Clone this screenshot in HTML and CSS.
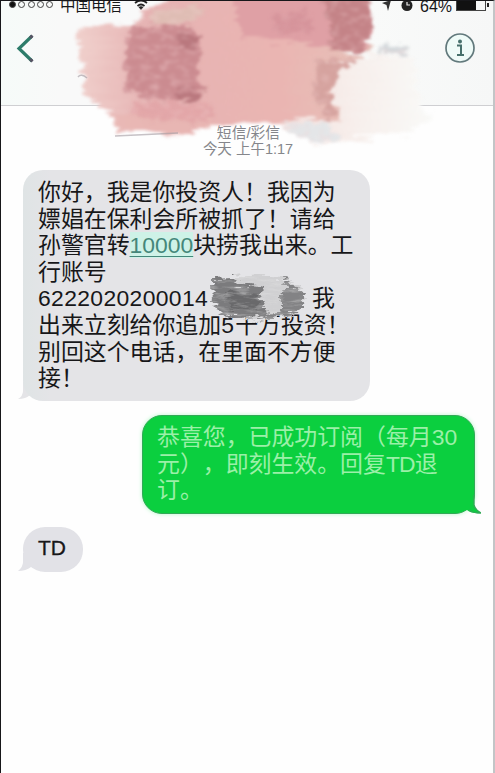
FILE: index.html
```html
<!DOCTYPE html>
<html lang="zh-CN">
<head>
<meta charset="utf-8">
<title>短信</title>
<link rel="stylesheet" href="styles.css">
</head>
<body>
<div class="phone">
  <header class="header">
    <div class="status">
      <div class="signal"><i class="on"></i><i></i><i></i><i></i><i></i></div>
      <span class="carrier">中国电信</span>
      <svg class="wifi" width="14" height="12" viewBox="0 0 14 12"><path d="M1 4Q7-1 13 4M3.500 7Q7 4 10.500 7" fill="none" stroke="#222" stroke-width="1.700"/><path d="M4.500 8Q7 6.500 9.500 8L7 11Z" fill="#222"/></svg>
      <svg class="state" width="31" height="12" viewBox="0 0 31 12"><path d="M0 3L9 0L6 11L4.500 5Z" fill="#333"/><circle cx="25" cy="5.500" r="5.500" fill="#222"/><path d="M25 2v3h3" fill="none" stroke="#eee" stroke-width="1.200"/></svg>
      <span class="percent">64%</span>
      <div class="battery"><b></b></div><div class="nub"></div>
    </div>
    <div class="nav">
      <svg width="20" height="32" viewBox="0 0 20 32"><path d="M17 4L4 16.500L17 29" fill="none" stroke="#2d7c6a" stroke-width="3.200"/><path d="M15 6l2.500-2.500M15 27l2.500 2.500" stroke="#575565" stroke-width="3"/></svg>
      <svg width="32" height="32" viewBox="0 0 32 32"><circle cx="16" cy="16" r="14" fill="#effbf8" stroke="#62797c" stroke-width="1.700"/><circle cx="16" cy="9.500" r="2" fill="#47716c"/><path d="M13 13.500h4v9M13 23h7" fill="none" stroke="#47716c" stroke-width="2"/></svg>
    </div>
  </header>
  <main class="thread">
    <div class="stamp"><p>短信/彩信</p><p class="time">今天 上午1:17</p></div>
    <section class="bubble received long">
      <p>你好，我是你投资人！我因为</p>
      <p>嫖娼在保利会所被抓了！请给</p>
      <p>孙警官转<a class="amount">10000</a>块捞我出来。工</p>
      <p>行账号</p>
      <p class="account"><span class="digits">6222020200014</span><span>我</span></p>
      <p>出来立刻给你追加<span class="five">5</span>千万投资！</p>
      <p>别回这个电话，在里面不方便</p>
      <p>接！</p>
      <svg class="tail" width="22" height="20" viewBox="0 0 22 20"><path d="M5 0V9Q5 14 0 17Q8 17 12 13L22 18V0Z" fill="#e4e4e7"/></svg>
      <svg class="scribble" width="112" height="70" viewBox="0 0 112 70">
        <defs><filter id="rough" x="-20%" y="-20%" width="140%" height="140%" color-interpolation-filters="sRGB"><feTurbulence type="fractalNoise" baseFrequency=".06 .3" numOctaves="4" seed="4" result="n"/><feDisplacementMap in="SourceGraphic" in2="n" scale="14" xChannelSelector="R" yChannelSelector="G" result="d"/><feColorMatrix in="n" values="0 0 0 0 .9  0 0 0 0 .9  0 0 0 0 .9  1 0 0 0 -.450" result="w"/><feComposite in="w" in2="d" operator="in" result="g"/><feMerge><feMergeNode in="d"/><feMergeNode in="g"/></feMerge><feGaussianBlur stdDeviation=".7"/></filter></defs>
        <g filter="url(#rough)">
          <path d="M13 19L56 12L82 14L100 22L106 37L98 50L84 54L55 58L25 52L12 38Z" fill="#d0d0d2"/>
          <path d="M12 15L31 14L37 20L62 24L60 34L65 43L63 54L35 55L19 48L13 38Z" fill="#7b7b7d"/>
          <path d="M82 15L89 16L91 23L104 30L104 42L96 50L84 53L57 57L58 50L78 49L82 40L80 31L87 25Z" fill="#838385"/>
          <path d="M25 29L58 32L57 46L30 47Z" fill="#69696b"/>
        </g>
      </svg>
    </section>
    <section class="bubble sent">
      <p>恭喜您，已成功订阅（每月30</p>
      <p>元），即刻生效。回复<span class="td">TD</span>退</p>
      <p>订。</p>
      <svg class="tail" width="24" height="20" viewBox="0 0 24 20"><path d="M17 0V10Q18 15 24 18Q15 19 10 15L0 18V0Z" fill="#0bcf3f"/><path d="M17 0V10Q18 15 24 18Q16 18 12 15" fill="none" stroke="#32a957" stroke-width="1.400"/></svg>
    </section>
    <section class="bubble received short">
      <p>TD</p>
      <svg class="tail" width="22" height="20" viewBox="0 0 22 20"><path d="M5 0V9Q5 14 0 18Q8 18 13 14L22 16V0Z" fill="#e2e2e7"/></svg>
    </section>
  </main>
  <svg class="paint" width="495" height="160" viewBox="0 0 495 160">
    <defs>
      <filter id="brush" x="-10%" y="-10%" width="120%" height="120%" color-interpolation-filters="sRGB"><feTurbulence type="fractalNoise" baseFrequency=".025 .16" numOctaves="4" seed="8" result="n"/><feDisplacementMap in="SourceGraphic" in2="n" scale="22" xChannelSelector="R" yChannelSelector="G"/><feGaussianBlur stdDeviation="1.600"/></filter>
      <filter id="grain" x="-10%" y="-10%" width="120%" height="120%" color-interpolation-filters="sRGB"><feTurbulence type="fractalNoise" baseFrequency=".1 .2" numOctaves="4" seed="3" result="n"/><feDisplacementMap in="SourceGraphic" in2="n" scale="16" xChannelSelector="R" yChannelSelector="G" result="d"/><feColorMatrix in="n" values="0 0 0 0 .96  0 0 0 0 .82  0 0 0 0 .82  1 0 0 0 -.450" result="w"/><feComposite in="w" in2="d" operator="in" result="g"/><feMerge><feMergeNode in="d"/><feMergeNode in="g"/></feMerge><feGaussianBlur stdDeviation="1.500"/></filter>
      <linearGradient id="pale"><stop offset="0" stop-color="#f3dfdc"/><stop offset=".5" stop-color="#f7efec"/><stop offset="1" stop-color="#f9faf8"/></linearGradient>
      <linearGradient id="rose" x2="1"><stop offset="0" stop-color="#f0d0cc"/><stop offset=".25" stop-color="#e6b3b3"/><stop offset=".7" stop-color="#eab5b2"/><stop offset="1" stop-color="#e6c2b9"/></linearGradient>
    </defs>
    <g filter="url(#brush)">
      <path d="M300 60L410 54L419 75L415 99L438 115L410 134L310 142L275 120Z" fill="url(#pale)"/>
      <path d="M76 30L128 25L151 7L195 -12H365V35L370 53L325 61L331 102L337 120L274 122L220 121L191 133L116 134L115 115L98 101L80 92L88 78L80 60Z" fill="url(#rose)"/>
      <path d="M229 -10H353L370 10L365 50L321 47L243 38Z" fill="#dfa0a5"/>
      <path d="M113 116H217V123L190 132L116 131Z" fill="#e9b7b3" opacity=".8"/>
    </g>
    <g filter="url(#grain)">
      <path d="M154 12L197 5L206 12L190 22L150 24Z" fill="#dfbdb4"/>
      <path d="M133 27L193 25L202 52L197 70L202 98L150 99L126 89L124 58Z" fill="#cb8b90"/>
      <path d="M177 32L200 36L195 50L177 49ZM174 90L207 91L199 100H174Z" fill="#b9777d"/>
      <path d="M272 15L306 10L314 32L276 34Z" fill="#d18c95" opacity=".6"/>
      <path d="M320 -12L367 -4L374 27L363 54L329 51L331 29Z" fill="#c48387"/>
      <path d="M319 59L356 60L337 71L330 94L337 117L325 121L323 107L314 101L315 73Z" fill="#d5a29e"/>
      <path d="M132 101L211 104L213 116L190 122L133 117Z" fill="#e1a2a5" opacity=".8"/>
      <path d="M285 124L325 122L342 138L326 143L295 137Z" fill="#e4e6e8"/>
      <path d="M379 47L389 44L410 51L407 56L390 53L376 54Z" fill="#d4d9dc"/>
    </g>
    <path d="M78 77Q81 73 87 78M115 136L178 133" fill="none" stroke="#a29aa0" stroke-width="1.500" opacity=".6"/>
  </svg>
</div>
</body>
</html>
```

FILE: styles.css
```css
* { box-sizing: border-box; }
body { margin: 0; background: #fefefe; color: #171719; font-family: "Liberation Sans", "Noto Sans CJK SC", sans-serif; }
p { margin: 0; white-space: nowrap; }
.phone { position: relative; width: 495px; height: 773px; overflow: hidden; border-top: 1px solid #17171a; border-left: 1px solid #17171a; border-right: 2px solid #c3c5c7; }
.header { height: 105px; background: linear-gradient(90deg, #f6fbf9, #f9f9f9 12%, #f9faf9 75%, #f6f7f7); border-bottom: 1px solid #cfcfd2; }
.status { display: flex; height: 12px; padding-left: 8px; align-items: flex-start; }
.signal { display: flex; gap: 2.3px; width: 51px; }
.signal i { width: 7px; height: 7px; border: 1px solid #444; border-radius: 50%; }
.signal .on { background: #111; }
.carrier { width: 65px; font-size: 15.5px; line-height: 16px; margin-top: -3px; }
.wifi { margin-left: 9px; margin-top: -2px; }
.state { margin-left: 234px; margin-top: -1px; }
.percent { margin-left: 7px; width: 36px; font-size: 16px; line-height: 16px; margin-top: -2px; }
.battery { width: 30px; height: 11px; margin-top: -1px; border: 1px solid #444; }
.battery b { display: block; width: 19px; height: 9px; background: #111; }
.nub { width: 2px; height: 4px; background: #222; margin: 2px 0 0 1px; }
.nav { display: flex; justify-content: space-between; padding: 19px 17px 0 14px; }
.thread { display: flex; flex-direction: column; align-items: flex-start; }
.stamp { width: 100%; padding: 19px 0 0; text-align: center; color: #85868b; font-size: 14.8px; line-height: 16px; height: 64px; }
.stamp p:first-child { padding-left: 3px; }
.stamp .time { padding-left: 2px; font-size: 14.5px; }
.bubble { position: relative; font-size: 22.9px; line-height: 26.6px; text-spacing-trim: space-all; }
.tail { position: absolute; z-index: -1; bottom: -1px; }
.received { background: #e4e4e7; margin-left: 22px; }
.received .tail { left: -5px; }
.long { width: 347px; height: 231px; border-radius: 20px; padding: 9px 0 0 15px; background: linear-gradient(90deg, #dfe4e5, #e4e4e7 8%); }
.amount { color: #45877a; background: #cef2e7; text-decoration: underline; text-decoration-thickness: 1px; text-underline-offset: 3px; }
.account { display: flex; justify-content: space-between; width: 297px; }
.digits { letter-spacing: .35px; }
.five { display: inline-block; width: 14px; }
.scribble { position: absolute; left: 177px; top: 93px; }
.sent { width: 333px; height: 99px; margin: 14px 0 0 141px; padding: 8px 0 0 14px; border: 1px solid #32a957; border-radius: 20px; background: #0bcf3f; color: #9bf0a8; box-shadow: 0 0 4px #b9f7cc; }
.sent .tail { right: -7px; bottom: -2px; z-index: 0; }
.td { letter-spacing: -.9px; }
.short { width: 60px; height: 45px; margin-top: 13px; padding: 8px 0 0 15px; border-radius: 22px; background: #e2e2e7; font-size: 21px; -webkit-text-stroke: .3px #171719; }
.paint { position: absolute; left: -1px; top: -1px; z-index: 1; pointer-events: none; }
```
